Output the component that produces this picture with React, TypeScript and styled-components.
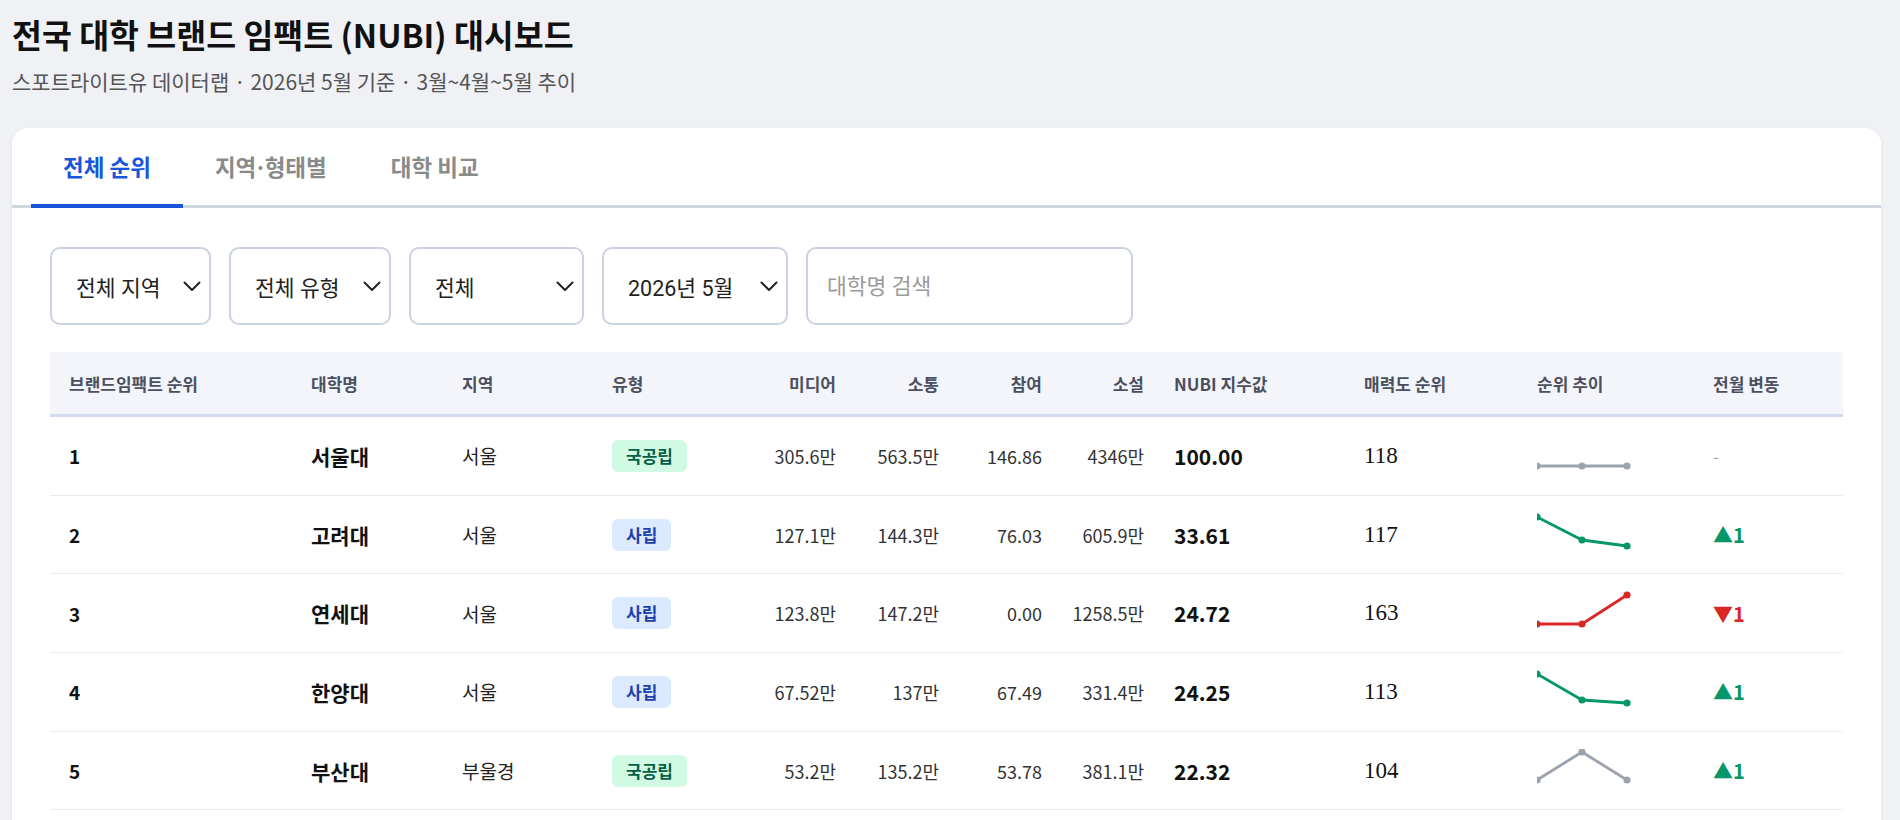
import React from 'react'
import styled, { createGlobalStyle, css } from 'styled-components'

const GlobalStyle = createGlobalStyle`
  body {
    margin: 0;
    background: #f0f1f5;
    font-family: "Noto Sans CJK KR", "Noto Sans", sans-serif;
    color: #1a1a1a;
  }
`

type Row = {
  rank: number
  name: string
  region: string
  type: '국공립' | '사립'
  media: string
  comm: string
  part: string
  social: string
  nubi: string
  attr: number
  trend: number[]
  tone: 'gray' | 'green' | 'red'
  change: null | { dir: 'up' | 'down'; n: number }
}

const rows: Row[] = [
  { rank: 1, name: '서울대', region: '서울', type: '국공립', media: '305.6만', comm: '563.5만', part: '146.86', social: '4346만', nubi: '100.00', attr: 118, trend: [32, 32, 32], tone: 'gray', change: null },
  { rank: 2, name: '고려대', region: '서울', type: '사립', media: '127.1만', comm: '144.3만', part: '76.03', social: '605.9만', nubi: '33.61', attr: 117, trend: [4, 27, 33], tone: 'green', change: { dir: 'up', n: 1 } },
  { rank: 3, name: '연세대', region: '서울', type: '사립', media: '123.8만', comm: '147.2만', part: '0.00', social: '1258.5만', nubi: '24.72', attr: 163, trend: [33, 33, 4], tone: 'red', change: { dir: 'down', n: 1 } },
  { rank: 4, name: '한양대', region: '서울', type: '사립', media: '67.52만', comm: '137만', part: '67.49', social: '331.4만', nubi: '24.25', attr: 113, trend: [4, 30, 33], tone: 'green', change: { dir: 'up', n: 1 } },
  { rank: 5, name: '부산대', region: '부울경', type: '국공립', media: '53.2만', comm: '135.2만', part: '53.78', social: '381.1만', nubi: '22.32', attr: 104, trend: [31, 3, 31], tone: 'gray', change: { dir: 'up', n: 1 } },
]

const toneColor = { gray: '#9ca3af', green: '#059669', red: '#dc2626' }

const Sparkline = ({ ys, tone }: { ys: number[]; tone: Row['tone'] }) => {
  const xs = [0, 45, 90]
  const c = toneColor[tone]
  const pts = ys.map((y, i) => `${xs[i]},${y}`).join(' ')
  return (
    <svg width="96" height="44" viewBox="0 0 96 44">
      <polyline points={pts} fill="none" stroke={c} strokeWidth="2.8" strokeLinejoin="round" />
      {ys.map((y, i) => (
        <circle key={i} cx={xs[i]} cy={y} r="3.6" fill={c} />
      ))}
    </svg>
  )
}

const Chevron = () => (
  <svg width="18" height="11" viewBox="0 0 18 11">
    <path d="M1.5 1.5 L9 9 L16.5 1.5" fill="none" stroke="#222" strokeWidth="2" strokeLinecap="round" strokeLinejoin="round" />
  </svg>
)

const filters = [
  { label: '전체 지역', w: 161 },
  { label: '전체 유형', w: 162 },
  { label: '전체', w: 175 },
  { label: '2026년 5월', w: 186 },
]

const headers: { label: string; align?: 'right' }[] = [
  { label: '브랜드임팩트 순위' },
  { label: '대학명' },
  { label: '지역' },
  { label: '유형' },
  { label: '미디어', align: 'right' },
  { label: '소통', align: 'right' },
  { label: '참여', align: 'right' },
  { label: '소설', align: 'right' },
  { label: 'NUBI 지수값' },
  { label: '매력도 순위' },
  { label: '순위 추이' },
  { label: '전월 변동' },
]

const App = () => {
  return (
    <Page>
      <GlobalStyle />
      <Title>전국 대학 브랜드 임팩트 (NUBI) 대시보드</Title>
      <Subtitle>스포트라이트유 데이터랩 · 2026년 5월 기준 · 3월~4월~5월 추이</Subtitle>
      <Card>
        <TabBar>
          <Tab $active>전체 순위</Tab>
          <Tab>
            지역<Dot>·</Dot>형태별
          </Tab>
          <Tab>대학 비교</Tab>
        </TabBar>
        <Body>
          <Filters>
            {filters.map((f) => (
              <Select key={f.label} style={{ width: f.w }}>
                <span>{f.label}</span>
                <Chevron />
              </Select>
            ))}
            <Search placeholder="대학명 검색" />
          </Filters>
          <Table>
            <HeadRow>
              {headers.map((h, i) => (
                <HeadCell key={h.label} $align={h.align} $first={i === 0} $wide={i === 8}>
                  {h.label}
                </HeadCell>
              ))}
            </HeadRow>
            {rows.map((r) => (
              <DataRow key={r.rank}>
                <Rank>{r.rank}</Rank>
                <Name>{r.name}</Name>
                <Region>{r.region}</Region>
                <Cell>
                  <Badge $kind={r.type}>{r.type}</Badge>
                </Cell>
                <Num>{r.media}</Num>
                <Num>{r.comm}</Num>
                <Num>{r.part}</Num>
                <Num>{r.social}</Num>
                <Nubi>{r.nubi}</Nubi>
                <Attr>{r.attr}</Attr>
                <Cell>
                  <Sparkline ys={r.trend} tone={r.tone} />
                </Cell>
                <Cell>
                  {r.change ? (
                    <Change $dir={r.change.dir}>
                      {r.change.dir === 'up' ? '▲' : '▼'}
                      {r.change.n}
                    </Change>
                  ) : (
                    <NoChange>-</NoChange>
                  )}
                </Cell>
              </DataRow>
            ))}
          </Table>
        </Body>
      </Card>
    </Page>
  )
}

export default App

const Page = styled.div`
  padding: 16px 19px 0 12px;
  height: 820px;
  box-sizing: border-box;
  overflow: hidden;
`

const Title = styled.h1`
  margin: 0;
  height: 36px;
  font-size: 32.5px;
  line-height: 36px;
  font-weight: 700;
  color: #111;
  white-space: nowrap;
`

const Subtitle = styled.p`
  margin: 16px 0 0;
  height: 26px;
  font-size: 21px;
  line-height: 26px;
  color: #555;
  white-space: nowrap;
`

const Card = styled.div`
  margin-top: 34px;
  background: #fff;
  border-radius: 16px;
  box-shadow: 0 1px 4px rgba(20, 30, 60, 0.06);
  min-height: 760px;
`

const TabBar = styled.div`
  display: flex;
  padding: 0 0 0 19px;
  border-bottom: 3px solid #d1d5e0;
`

const Tab = styled.div<{ $active?: boolean }>`
  height: 28px;
  padding: 24px 32px;
  line-height: 28px;
  font-size: 22.5px;
  font-weight: 700;
  color: ${(p) => (p.$active ? '#1a56db' : '#8a8a8a')};
  border-bottom: 4px solid ${(p) => (p.$active ? '#1a56db' : 'transparent')};
  margin-bottom: -3px;
  cursor: pointer;
`

const Dot = styled.span`
  font-family: "Noto Sans", sans-serif;
  margin: 0 1px;
`

const Body = styled.div`
  padding: 39px 38px 0;
`

const Filters = styled.div`
  display: flex;
  gap: 18px;
  align-items: center;
`

const boxStyle = css`
  box-sizing: border-box;
  height: 78px;
  border: 2px solid #cbd3e3;
  border-radius: 10px;
  background: #fff;
  font-family: Roboto, "Noto Sans CJK KR", sans-serif;
  font-size: 21.5px;
  color: #222;
`

const Select = styled.div`
  ${boxStyle};
  display: flex;
  align-items: center;
  justify-content: space-between;
  padding: 0 8px 0 24px;
`

const Search = styled.input`
  ${boxStyle};
  width: 327px;
  padding: 0 19px;
  outline: none;
  &::placeholder {
    color: #9a9a9a;
  }
`

const Table = styled.div`
  margin-top: 27px;
`

const gridCols = css`
  display: grid;
  grid-template-columns: 261px 151px 150px 128px 96px 103px 103px 102px 220px 173px 176px 1fr;
  align-items: center;
`

const HeadRow = styled.div`
  ${gridCols};
  height: 62px;
  background: #f4f5fa;
  border-bottom: 3px solid #d3dbec;
`

const HeadCell = styled.div<{ $align?: 'right'; $first?: boolean; $wide?: boolean }>`
  font-size: 17px;
  font-weight: 700;
  color: #4b5060;
  text-align: ${(p) => p.$align || 'left'};
  padding-left: ${(p) => (p.$first ? '19px' : p.$wide ? '30px' : '0')};
  white-space: nowrap;
`

const DataRow = styled.div`
  ${gridCols};
  box-sizing: border-box;
  height: 78.7px;
  border-bottom: 1px solid #e9ebf2;
`

const Cell = styled.div`
  display: flex;
  align-items: center;
`

const Rank = styled.div`
  padding-left: 19px;
  font-size: 19px;
  font-weight: 700;
  color: #111;
`

const Name = styled.div`
  font-size: 21px;
  font-weight: 700;
  color: #111;
`

const Region = styled.div`
  font-size: 19px;
  color: #222;
`

const Badge = styled.span<{ $kind: '국공립' | '사립' }>`
  display: inline-block;
  padding: 3px 14px;
  border-radius: 6px;
  font-size: 17px;
  font-weight: 700;
  line-height: 26px;
  background: ${(p) => (p.$kind === '국공립' ? '#d1fae5' : '#dbeafe')};
  color: ${(p) => (p.$kind === '국공립' ? '#065f46' : '#1e40af')};
`

const Num = styled.div`
  text-align: right;
  font-size: 18px;
  color: #333;
`

const Nubi = styled.div`
  padding-left: 30px;
  font-size: 21px;
  font-weight: 700;
  color: #111;
`

const Attr = styled.div`
  font-family: "Liberation Serif", serif;
  font-size: 23px;
  color: #111;
`

const Change = styled.span<{ $dir: 'up' | 'down' }>`
  font-size: 20px;
  font-weight: 700;
  color: ${(p) => (p.$dir === 'up' ? '#059669' : '#dc2626')};
`

const NoChange = styled.span`
  font-size: 17px;
  color: #9ca3af;
`
